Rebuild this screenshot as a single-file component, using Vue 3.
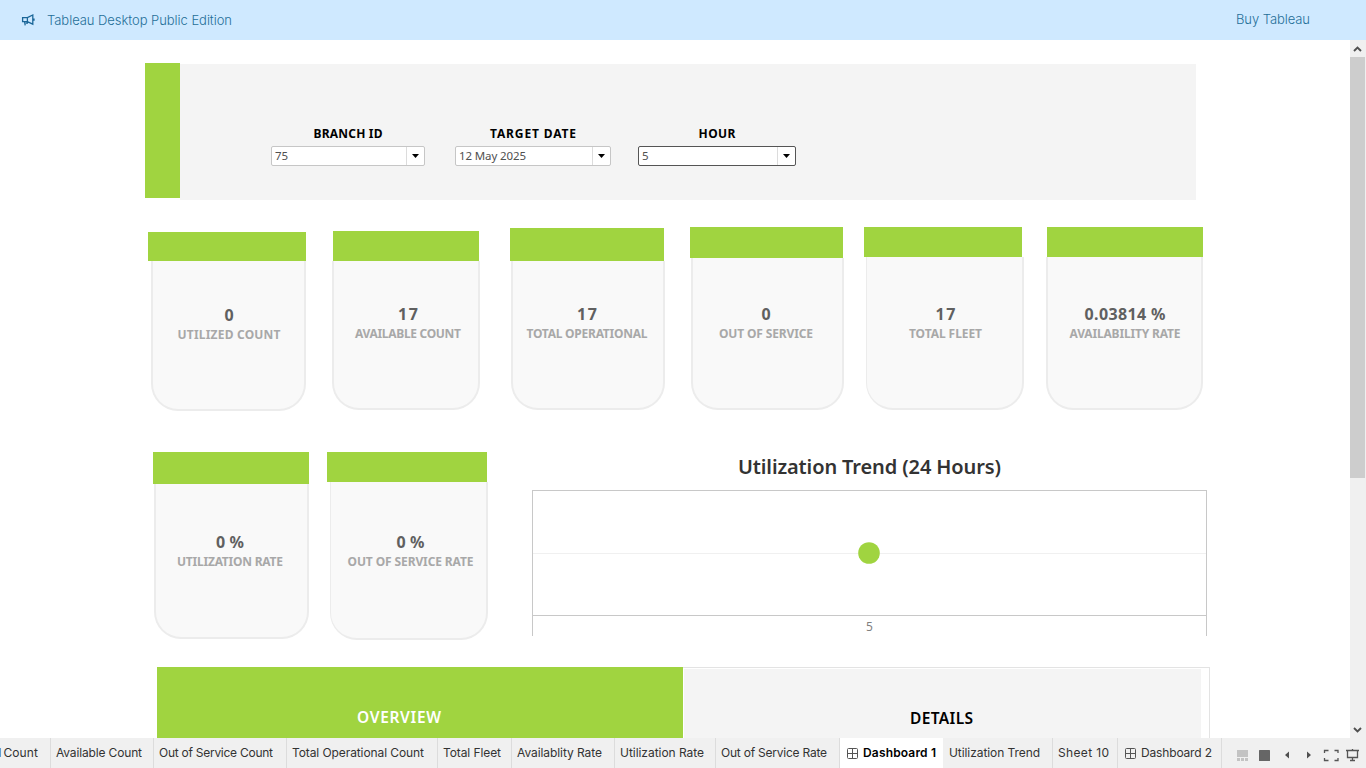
<script setup>
// Sets the tracking of a label so that it fills the given width.
const vFit = {
  mounted(el, { value }) {
    el.style.letterSpacing = '0px'
    const n = el.textContent.length
    const natural = el.getBoundingClientRect().width
    const ls = (value - natural) / (n - 1)
    el.style.letterSpacing = ls + 'px'
    el.style.marginRight = -ls + 'px'
  }
}

const filters = [
  { label: 'BRANCH ID', value: '75', width: 154, gap: 0, lw: 69, vw: 13 },
  { label: 'TARGET DATE', value: '12 May 2025', width: 156, gap: 30, lw: 86, vw: 67 },
  { label: 'HOUR', value: '5', width: 158, gap: 27, lw: 37, vw: 0, active: true }
]

const topCards = [
  { value: '0', label: 'UTILIZED COUNT', x: 148, y: 5, w: 158, h: 29, bx: 151, bw: 155, bottom: 184, cx: 229, ty: 78, lw: 103, vw: 0 },
  { value: '17', label: 'AVAILABLE COUNT', x: 333, y: 4, w: 146, h: 30, bx: 332, bw: 148, bottom: 183, cx: 408, ty: 77, lw: 106, vw: 20 },
  { value: '17', label: 'TOTAL OPERATIONAL', x: 510, y: 1, w: 154, h: 33, bx: 511, bw: 154, bottom: 183, cx: 587, ty: 77, lw: 121, vw: 20 },
  { value: '0', label: 'OUT OF SERVICE', x: 690, y: 0, w: 153, h: 31, bx: 691, bw: 153, bottom: 183, cx: 766, ty: 77, lw: 94, vw: 0 },
  { value: '17', label: 'TOTAL FLEET', x: 864, y: 0, w: 158, h: 30, bx: 866, bw: 158, bottom: 183, cx: 946, ty: 77, lw: 73, vw: 20, thin: true },
  { value: '0.03814 %', label: 'AVAILABILITY RATE', x: 1047, y: 0, w: 156, h: 30, bx: 1046, bw: 157, bottom: 183, cx: 1125, ty: 77, lw: 111, vw: 81 }
]
const lowerCards = [
  { value: '0 %', label: 'UTILIZATION RATE', x: 153, y: 0, w: 156, h: 32, bx: 154, bw: 155, bottom: 187, cx: 230, ty: 80, lw: 106, vw: 28 },
  { value: '0 %', label: 'OUT OF SERVICE RATE', x: 327, y: 0, w: 160, h: 30, bx: 330, bw: 158, bottom: 188, cx: 411, ty: 80, lw: 126, vw: 28, thin: true }
]

const cardStyle = (c, i, list) => ({
  width: c.w + 'px',
  marginLeft: c.x - (i ? list[i - 1].x + list[i - 1].w : 0) + 'px',
  marginTop: c.y + 'px'
})
const bodyStyle = (c) => ({
  width: c.bw + 'px',
  marginLeft: c.bx - c.x + 'px',
  height: c.bottom - c.y - c.h + 'px',
  paddingTop: c.ty - c.y - c.h + 'px'
})
const textStyle = (c) => ({ marginLeft: 2 * c.cx - 2 * c.bx - c.bw + 'px' })

const tabs = [
  { label: 'Utilized Count', width: 51, first: true, tw: 80 },
  { label: 'Available Count', width: 103, tw: 86 },
  { label: 'Out of Service Count', width: 133, tw: 114 },
  { label: 'Total Operational Count', width: 151, tw: 132 },
  { label: 'Total Fleet', width: 74, tw: 58 },
  { label: 'Availablity Rate', width: 103, tw: 85 },
  { label: 'Utilization Rate', width: 101, tw: 84 },
  { label: 'Out of Service Rate', width: 124, tw: 106 },
  { label: 'Dashboard 1', width: 103, grid: true, active: true, tw: 73 },
  { label: 'Utilization Trend', width: 110, tw: 91, shifted: true },
  { label: 'Sheet 10', width: 65, tw: 51 },
  { label: 'Dashboard 2', width: 104, grid: true, tw: 71 }
]
</script>

<template>
  <div class="app">
    <header class="banner">
      <svg class="horn" width="14" height="14" viewBox="0 0 14 14" fill="none" stroke="#1a6698" stroke-width="1.3">
        <path d="M1.6 4.600h4.800L11.800 2v9.200L6.400 8.600H1.600z M6.400 4.600v4 M3.600 8.700l.6 3.600 M6.400 8.700v1.500H4.800 M13 5.400v2.400" />
      </svg>
      <span class="banner-title" v-fit="185">Tableau Desktop Public Edition</span>
      <span class="buy" v-fit="74">Buy Tableau</span>
    </header>

    <div class="viewport">
      <main class="canvas">
        <section class="filter-row">
          <div class="accent"></div>
          <div class="filter-panel">
            <div v-for="f in filters" :key="f.label" class="filter" :style="{ width: f.width + 'px', marginLeft: f.gap + 'px' }">
              <div class="filter-label"><span v-fit="f.lw">{{ f.label }}</span></div>
              <div class="select" :class="{ active: f.active }">
                <div class="select-value"><span v-if="f.vw" v-fit="f.vw">{{ f.value }}</span><span v-else>{{ f.value }}</span></div>
                <div class="select-arrow">
                  <svg width="7" height="4" viewBox="0 0 7 4"><path d="M0 0h7L3.5 4z" fill="#000" /></svg>
                </div>
              </div>
            </div>
          </div>
        </section>

        <section class="cards top">
          <article v-for="(c, i) in topCards" :key="c.label" class="card" :style="cardStyle(c, i, topCards)">
            <div class="cap" :style="{ height: c.h + 'px' }"></div>
            <div class="body" :class="{ thin: c.thin }" :style="bodyStyle(c)">
              <div class="text" :style="textStyle(c)">
                <div class="value"><span v-if="c.vw" v-fit="c.vw">{{ c.value }}</span><span v-else>{{ c.value }}</span></div>
                <div class="label"><span v-fit="c.lw">{{ c.label }}</span></div>
              </div>
            </div>
          </article>
        </section>

        <section class="cards lower">
          <article v-for="(c, i) in lowerCards" :key="c.label" class="card" :style="cardStyle(c, i, lowerCards)">
            <div class="cap" :style="{ height: c.h + 'px' }"></div>
            <div class="body" :class="{ thin: c.thin }" :style="bodyStyle(c)">
              <div class="text" :style="textStyle(c)">
                <div class="value"><span v-fit="c.vw">{{ c.value }}</span></div>
                <div class="label"><span v-fit="c.lw">{{ c.label }}</span></div>
              </div>
            </div>
          </article>
          <div class="trend">
            <h2><span v-fit="263">Utilization Trend (24 Hours)</span></h2>
            <div class="plot">
              <svg width="673" height="124" viewBox="0 0 673 124">
                <path d="M0 62.5h673" stroke="#f0f0f0" />
                <circle cx="336" cy="62" r="10.8" fill="#a0d440" />
              </svg>
            </div>
            <div class="axis">5</div>
          </div>
        </section>

        <section class="nav">
          <div class="overview"><span v-fit="84">OVERVIEW</span></div>
          <div class="details-wrap"><div class="details"><span v-fit="63">DETAILS</span></div></div>
        </section>
      </main>

      <div class="scrollbar">
        <div class="sb-btn"><svg width="9" height="6" viewBox="0 0 9 6"><path d="M1 5l3.5-3.5L8 5" fill="none" stroke="#505050" stroke-width="1.9" /></svg></div>
        <div class="thumb"></div>
        <div class="sb-btn bottom"><svg width="9" height="6" viewBox="0 0 9 6"><path d="M1 1l3.5 3.5L8 1" fill="none" stroke="#505050" stroke-width="1.9" /></svg></div>
      </div>
    </div>

    <footer class="tabbar">
      <div v-for="t in tabs" :key="t.label" class="tab" :class="{ active: t.active, first: t.first, dash: t.grid, shifted: t.shifted }" :style="{ width: t.width + 'px' }">
        <svg v-if="t.grid" width="11" height="11" viewBox="0 0 11 11" fill="none" stroke="#555">
          <rect x=".5" y=".5" width="10" height="10" rx="1" /><path d="M5.5 1v9M1 5.5h9" />
        </svg>
        <span v-fit="t.tw">{{ t.label }}</span>
      </div>
      <div class="tools">
        <svg width="130" height="16" viewBox="0 0 130 16">
          <path d="M2 3h11v7H2zM2 11h3v3H2zM6 11h3v3H6zM10 11h3v3h-3z" fill="#c3c3c3" />
          <rect x="24" y="3" width="11" height="11" rx=".5" fill="#666" />
          <path d="M54 4.500v7l-4-3.500z M72 4.500v7l4-3.500z" fill="#505050" />
          <path d="M89.500 6V3.500h4 M99.500 3.500h3.500V6 M103 11v2.500h-3.500 M93.500 13.500h-4V11" fill="none" stroke="#555" stroke-width="1.300" />
          <path d="M111 3.500h13 M112.500 4v6.500h10V4 M117.500 2v1.500 M117.500 10.500v3 M115 13.500h5" fill="none" stroke="#555" stroke-width="1.300" />
        </svg>
      </div>
    </footer>
  </div>
</template>

<style>
body { margin: 0; overflow: hidden; background: #fff; }
</style>

<style scoped>
* { box-sizing: border-box; }
.app { width: 1366px; height: 768px; display: flex; flex-direction: column; overflow: hidden; font-family: "Noto Sans", "Open Sans", sans-serif; background: #fff; }
span { white-space: nowrap; }
.banner { height: 40px; flex: none; background: #cfe9ff; display: flex; align-items: center; padding: 0 56px 0 21px; color: #1f6f98; font: 300 13px/20px Inter, sans-serif; }
.horn { margin-right: 12px; flex: none; }
.banner-title { display: block; }
.buy { display: block; padding-bottom: 2px; }
.banner .buy { margin-left: 1004px; }

.viewport { flex: 1; min-height: 0; display: flex; overflow: hidden; }
.canvas { width: 1350px; flex: none; height: 698px; overflow: hidden; }
.filter-row { display: flex; padding: 23px 0 0 145px; height: 160px; }
.accent { width: 35px; height: 135px; background: #a0d440; }
.filter-panel { width: 1016px; height: 136px; margin-top: 1px; background: #f4f4f4; display: flex; padding: 60px 0 0 91px; }
.filter-label { height: 22px; line-height: 19px; text-align: center; font-size: 12px; font-weight: 700; color: #000; }
.select { display: flex; height: 20px; border: 1px solid #c6c6c6; border-radius: 2px; background: #fff; }
.select.active { border-color: #555; }
.select-value { flex: 1; padding-left: 3px; font: 400 11.5px/18px "Noto Sans", sans-serif; color: #505050; }
.select-arrow { width: 18px; border-left: 1px solid #dcdcdc; display: flex; align-items: center; justify-content: center; }

.cards { display: flex; align-items: flex-start; }
.top { height: 225px; padding-top: 27px; }
.lower { height: 202px; padding-top: 27px; }
.card { flex: none; }
.cap { background: #a0d440; }
.body { border: 2px solid #ececec; border-top: 0; border-radius: 0 0 27px 27px; background: #f9f9f9; }
.body.thin { border-left-width: 1px; }
.text { display: flex; flex-direction: column; align-items: center; text-align: center; }
.value { height: 20px; line-height: 20px; font-size: 16px; font-weight: 700; color: #606060; white-space: nowrap; }
.label { height: 19px; line-height: 19px; font-size: 12px; font-weight: 700; color: #a8a8a8; white-space: nowrap; }

.trend { width: 675px; margin-left: 45px; }
.trend h2 { margin: 0; height: 38px; line-height: 30px; text-align: center; font-size: 20px; font-weight: 600; color: #333; }
.plot { height: 126px; border: 1px solid #c8c8c8; }
.plot svg { display: block; }
.axis { height: 20px; border: 1px solid #c8c8c8; border-width: 0 1px; text-align: center; font: 400 12px/21px "Noto Sans", sans-serif; color: #808080; }

.nav { display: flex; margin-top: 40px; padding-left: 157px; height: 90px; }
.overview { width: 526px; background: #a0d440; color: #fff; padding-right: 42px; }
.overview, .details { text-align: center; font-size: 15.5px; font-weight: 600; line-height: 24px; }
.overview { padding-top: 38px; }
.details-wrap { width: 527px; border: 1px solid #e3e3e3; border-width: 1px 1px 0 0; padding: 1px 8px 0 1px; }
.details { height: 90px; background: #f4f4f4; color: #000; padding: 37px 2px 0 0; }

.scrollbar { width: 16px; background: #f0f0f0; display: flex; flex-direction: column; }
.sb-btn { height: 17px; width: 15px; flex: none; display: flex; align-items: center; justify-content: center; }
.thumb { width: 15px; height: 421px; background: #cdcdcd; }
.sb-btn.bottom { margin-top: auto; }

.tabbar { height: 30px; flex: none; background: #f0f0f0; display: flex; font: 400 12px/29px Inter, sans-serif; color: #333; }
.tab { flex: none; display: flex; align-items: center; border-right: 1px solid #dcdcdc; padding-left: 5px; height: 30px; overflow: hidden; }
.tab span { padding-bottom: 1px; }
.tab.first { justify-content: flex-end; padding: 0 12px 0 0; }
.tab.first span { word-spacing: -1.5px; }
.tab.dash { padding-left: 7px; }
.tab.shifted { padding-left: 6px; }
.tab svg { flex: none; margin-right: 5px; }
.tab.active { background: #fff; color: #000; font-weight: 600; border-right: 0; }
.tools { margin-left: 13px; padding-top: 9px; height: 30px; }
.tools svg { display: block; }
</style>
